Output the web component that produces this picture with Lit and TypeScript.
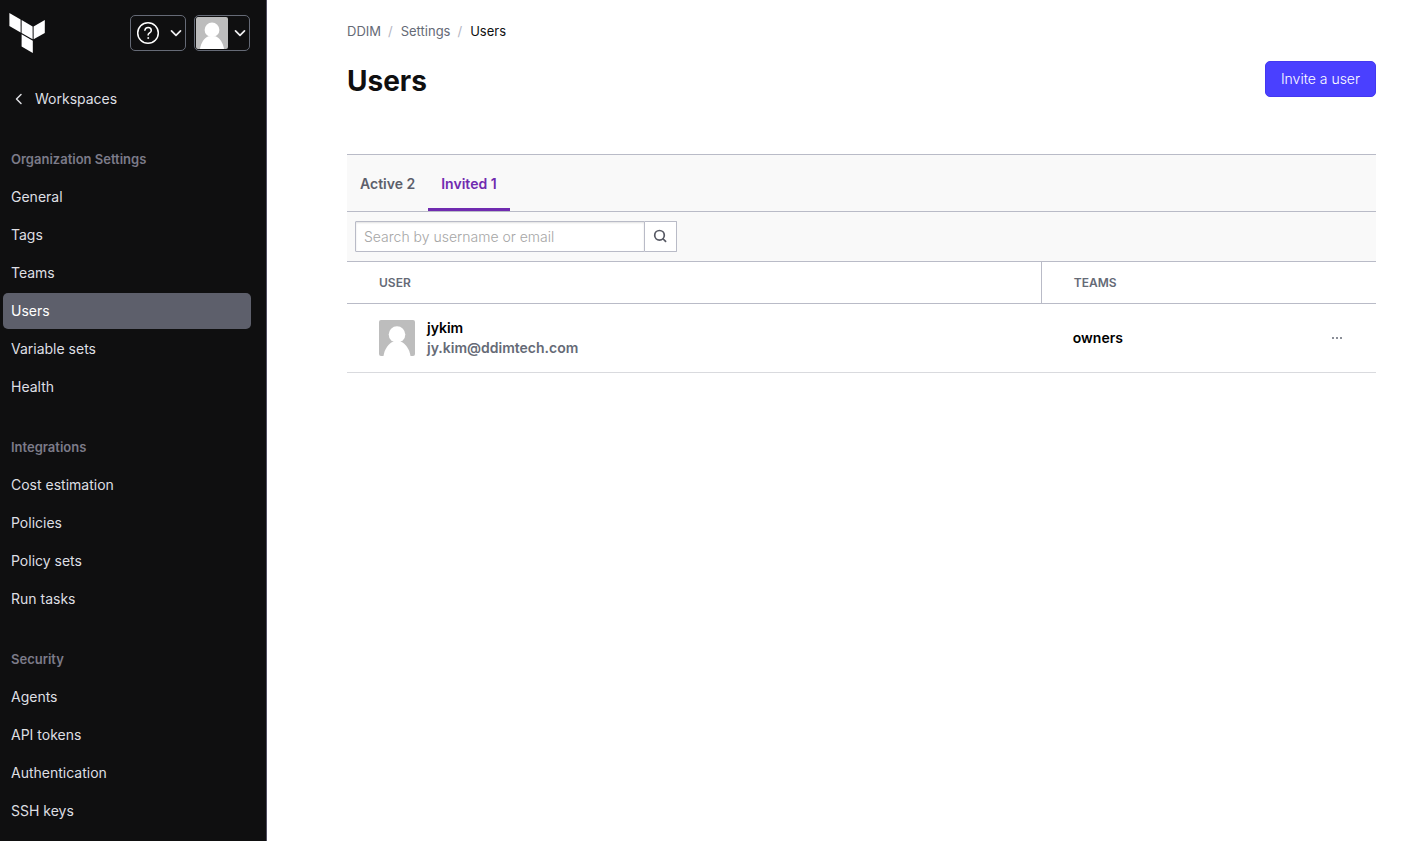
import { LitElement, html, css, svg } from "lit";
import { customElement, property, state } from "lit/decorators.js";
import { classMap } from "lit/directives/class-map.js";

interface NavGroup {
  title: string;
  items: string[];
}

interface Member {
  name: string;
  email: string;
  teams: string;
}

const NAV: NavGroup[] = [
  {
    title: "Organization Settings",
    items: ["General", "Tags", "Teams", "Users", "Variable sets", "Health"],
  },
  {
    title: "Integrations",
    items: ["Cost estimation", "Policies", "Policy sets", "Run tasks"],
  },
  {
    title: "Security",
    items: ["Agents", "API tokens", "Authentication", "SSH keys"],
  },
];

const INVITED: Member[] = [
  { name: "jykim", email: "jy.kim@ddimtech.com", teams: "owners" },
];

const chevronDown = html`<svg width="12" height="12" viewBox="0 0 12 12" fill="none" aria-hidden="true">
  ${svg`<path d="M1.5 3.800 6 8.300 10.500 3.800" stroke="#efeff1" stroke-width="1.700" stroke-linecap="round" stroke-linejoin="round" />`}
</svg>`;

@customElement("user-avatar")
export class UserAvatar extends LitElement {
  @property({ type: Number }) size = 36;

  static styles = css`
    :host {
      display: block;
      flex: none;
    }
    svg {
      display: block;
      border-radius: 2px;
    }
  `;

  render() {
    return html`<svg width=${this.size} height=${this.size} viewBox="0 0 36 36" aria-hidden="true">
      <rect width="36" height="36" fill="#bdbdbd" />
      <path d="M4.500 36C5.500 29 9.500 23.500 14 21.700h8C26.500 23.500 30.500 29 31.500 36z" fill="#fff" />
      <circle cx="18" cy="14.500" r="8.300" fill="#fff" />
    </svg>`;
  }
}

@customElement("side-nav")
export class SideNav extends LitElement {
  @property() current = "Users";

  static styles = css`
    :host {
      display: block;
      box-sizing: border-box;
      width: 267px;
      padding: 12px 15px 12px 3px;
      background: #0f0f10;
      border-right: 1px solid #4f4d5f;
      color: #dedfe3;
      font-size: 14px;
      line-height: 20px;
    }
    .top {
      display: flex;
      align-items: center;
      gap: 8px;
      padding: 0 1px 0 6px;
      height: 42px;
      margin-bottom: 27px;
    }
    .logo {
      display: block;
      margin-right: auto;
    }
    .logo svg {
      display: block;
    }
    .menu {
      display: flex;
      align-items: center;
      justify-content: space-between;
      box-sizing: border-box;
      width: 56px;
      height: 36px;
      padding: 0 3px 0 5px;
      background: transparent;
      border: 1px solid #656a76;
      border-radius: 5px;
    }
    .account {
      padding-left: 1px;
    }
    .link {
      display: flex;
      align-items: center;
      gap: 8px;
      height: 36px;
      padding: 0 8px;
      border-radius: 5px;
      color: inherit;
      text-decoration: none;
    }
    .current {
      background: #5d5f6b;
      color: #fff;
    }
    .group {
      margin-top: 24px;
    }
    .title {
      margin: 0 0 2px;
      padding: 8px;
      color: #7c7b89;
      font-size: 13px;
      line-height: 20px;
      font-weight: 600;
    }
    .list {
      display: grid;
      gap: 2px;
      margin: 0;
      padding: 0;
      list-style: none;
    }
  `;

  render() {
    return html`
      <div class="top">
        <a class="logo" href="#" aria-label="Terraform home">
          <svg width="36" height="40" viewBox="0 0 36 40" fill="#fff" aria-hidden="true">
            <path d="M.4 0 11.600 6.600V19.500L.4 12.900z" />
            <path d="M12.600 7 23.600 13.500V26.200L12.600 19.900z" />
            <path d="M24.600 13.500 35.800 7V19.900L24.600 26.200z" />
            <path d="M12.600 21.300 23.800 27.700V40L12.600 33.600z" />
          </svg>
        </a>
        <button class="menu" type="button" aria-label="Help">
          <svg width="24" height="24" viewBox="0 0 24 24" fill="none" stroke="#fff" stroke-linecap="round" aria-hidden="true">
            <circle cx="12" cy="12" r="10.300" stroke-width="1.500" />
            <path d="M8.900 9.200C9.300 7.500 10.500 6.600 12.100 6.600c1.800 0 3.200 1.100 3.200 2.800 0 2.300-3.200 2.600-3.200 4.600" stroke-width="1.500" />
            <circle cx="12.100" cy="17" r=".5" fill="#fff" stroke-width=".8" />
          </svg>
          ${chevronDown}
        </button>
        <button class="menu account" type="button" aria-label="Account">
          <user-avatar size="32"></user-avatar>
          ${chevronDown}
        </button>
      </div>
      <nav aria-label="Organization">
        <a class="link" href="#workspaces">
          <svg width="16" height="16" viewBox="0 0 16 16" fill="none" aria-hidden="true">
            <path d="M10 3.500 5.500 8l4.500 4.500" stroke="#dedfe3" stroke-width="1.500" stroke-linecap="round" stroke-linejoin="round" />
          </svg>
          Workspaces
        </a>
        ${NAV.map(
          (group) => html`<section class="group">
            <h2 class="title">${group.title}</h2>
            <ul class="list">
              ${group.items.map(
                (item) => html`<li>
                  <a class=${classMap({ link: true, current: item === this.current })} href="#">${item}</a>
                </li>`,
              )}
            </ul>
          </section>`,
        )}
      </nav>
    `;
  }
}

@customElement("app-root")
export class AppRoot extends LitElement {
  @state() private query = "";

  static styles = css`
    :host {
      display: flex;
      min-height: 100vh;
      background: #fff;
      color: #0f0f10;
      font-family: Inter, "Liberation Sans", sans-serif;
      font-size: 14px;
      line-height: 20px;
    }
    side-nav {
      flex: none;
    }
    .main {
      flex: 1;
      min-width: 0;
      padding: 21px 27px 24px 80px;
    }
    .crumbs {
      display: flex;
      gap: 7px;
      margin: 0;
      padding: 0;
      list-style: none;
      font-size: 13px;
      color: #b4b5c2;
    }
    .crumbs li {
      display: flex;
      gap: 8px;
    }
    .crumbs a {
      color: #656a76;
      text-decoration: none;
    }
    .crumbs a[aria-current] {
      color: #0f0f10;
    }
    .head {
      display: flex;
      align-items: flex-start;
      justify-content: space-between;
      margin: 20px 0 53px;
    }
    h1 {
      margin: 0;
      font-size: 28px;
      line-height: 40px;
      font-weight: 700;
    }
    .invite {
      height: 36px;
      padding: 0 15px;
      border: 1px solid #4338f0;
      border-radius: 5px;
      background: #4a40ff;
      color: #fff;
      font: inherit;
      font-weight: 300;
    }
    .tabs {
      display: flex;
      background: #f9f9f9;
      border-top: 1px solid #b9bbc7;
      border-bottom: 1px solid #b9bbc7;
    }
    .tab {
      height: 56px;
      padding: 5px 13px 0;
      border: 0;
      border-bottom: 3px solid transparent;
      background: none;
      color: #5d5f6b;
      font: inherit;
      font-weight: 600;
    }
    .tab[aria-selected="true"] {
      color: #702bb0;
      border-bottom-color: #702bb0;
    }
    .filter {
      display: flex;
      padding: 9px 8px;
      background: #f9f9f9;
      border-bottom: 1px solid #b9bbc7;
    }
    .search {
      box-sizing: border-box;
      width: 290px;
      height: 31px;
      padding: 0 8px;
      border: 1px solid #b9bbc7;
      border-radius: 1px 0 0 1px;
      background: #fff;
      box-shadow: inset 0 1px 2px rgba(0, 0, 0, 0.12);
      color: #0f0f10;
      font: inherit;
      font-weight: 300;
    }
    .search::placeholder {
      color: #a6a6a6;
      opacity: 1;
    }
    .go {
      display: grid;
      place-items: center;
      box-sizing: border-box;
      width: 32px;
      height: 31px;
      padding: 0 2px 1px 0;
      border: 1px solid #b9bbc7;
      border-left: 0;
      border-radius: 0 1px 1px 0;
      background: #fff;
    }
    .table {
      width: 100%;
      border-collapse: separate;
      border-spacing: 0;
      font-weight: 600;
      text-align: left;
    }
    th {
      box-sizing: border-box;
      height: 42px;
      padding: 0 32px;
      border-bottom: 1px solid #b9bbc7;
      color: #656a76;
      font-size: 12px;
      font-weight: 600;
    }
    .teams {
      width: 25%;
      border-left: 1px solid #b9bbc7;
    }
    .actions {
      width: 78px;
    }
    td {
      padding: 14px 32px;
      border-bottom: 1px solid #d9dade;
      color: #000;
    }
    .user {
      display: flex;
      align-items: center;
      gap: 12px;
    }
    .email {
      color: #656a76;
    }
    .more {
      display: block;
      margin-left: auto;
      padding: 0;
      border: 0;
      background: none;
    }
    .more svg {
      display: block;
    }
  `;

  private onSearch(e: Event) {
    this.query = (e.target as HTMLInputElement).value;
  }

  render() {
    const rows = INVITED.filter((m) => (m.name + m.email).includes(this.query));
    return html`
      <side-nav current="Users"></side-nav>
      <main class="main">
        <nav aria-label="Breadcrumb">
          <ol class="crumbs">
            <li><a href="#">DDIM</a></li>
            <li>/ <a href="#">Settings</a></li>
            <li>/ <a href="#" aria-current="page">Users</a></li>
          </ol>
        </nav>
        <div class="head">
          <h1>Users</h1>
          <button class="invite" type="button">Invite a user</button>
        </div>
        <div class="tabs" role="tablist">
          <button class="tab" type="button" role="tab" aria-selected="false">Active 2</button>
          <button class="tab" type="button" role="tab" aria-selected="true">Invited 1</button>
        </div>
        <form class="filter" role="search" @submit=${(e: Event) => e.preventDefault()}>
          <input
            class="search"
            type="text"
            aria-label="Search by username or email"
            placeholder="Search by username or email"
            .value=${this.query}
            @input=${this.onSearch}
          />
          <button class="go" type="submit" aria-label="Search">
            <svg width="14" height="14" viewBox="0 0 14 14" fill="none" stroke="#565863" stroke-width="1.700" stroke-linecap="round" aria-hidden="true">
              <circle cx="6.500" cy="6.300" r="4.800" />
              <path d="m10.200 10 2.400 2.400" />
            </svg>
          </button>
        </form>
        <table class="table">
          <thead>
            <tr>
              <th scope="col">USER</th>
              <th class="teams" scope="col">TEAMS</th>
              <th class="actions"></th>
            </tr>
          </thead>
          <tbody>
            ${rows.map(
              (m) => html`<tr>
                <td>
                  <div class="user">
                    <user-avatar size="36"></user-avatar>
                    <div>
                      <div>${m.name}</div>
                      <div class="email">${m.email}</div>
                    </div>
                  </div>
                </td>
                <td>${m.teams}</td>
                <td>
                  <button class="more" type="button" aria-label="Actions for ${m.name}">
                    <svg width="14" height="14" viewBox="0 0 14 14" fill="#656a76" aria-hidden="true">
                      <circle cx="3" cy="7" r="1" />
                      <circle cx="7" cy="7" r="1" />
                      <circle cx="11" cy="7" r="1" />
                    </svg>
                  </button>
                </td>
              </tr>`,
            )}
          </tbody>
        </table>
      </main>
    `;
  }
}
